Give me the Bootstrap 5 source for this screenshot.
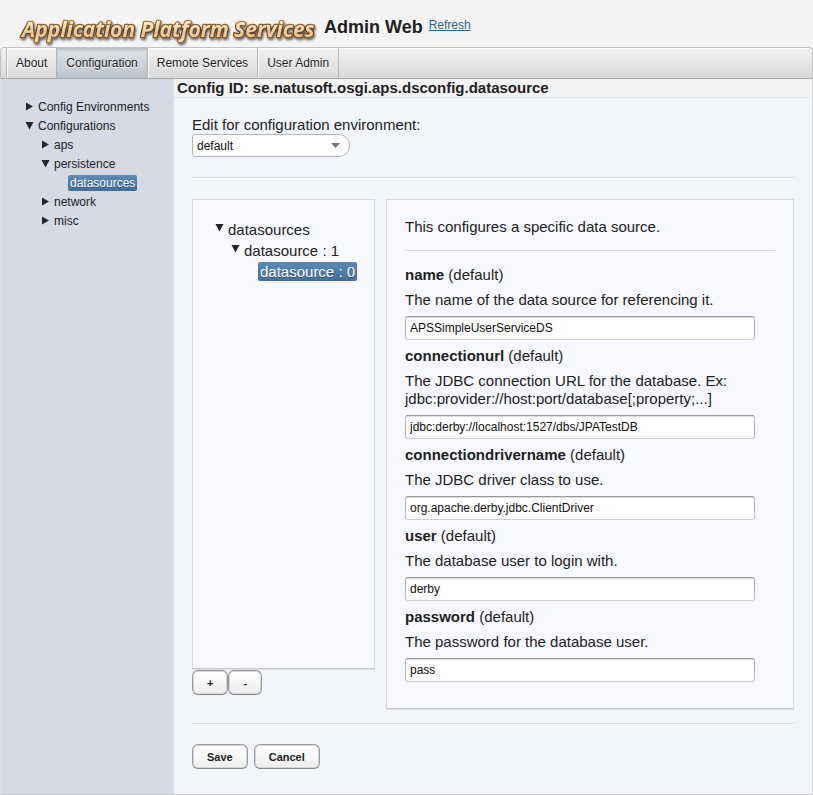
<!DOCTYPE html>
<html lang="en">
<head>
<meta charset="utf-8">
<meta name="viewport" content="width=device-width, initial-scale=1">
<title>Application Platform Services - Admin Web</title>
<link rel="stylesheet" href="https://cdn.jsdelivr.net/npm/bootstrap@5.3.0/dist/css/bootstrap.min.css">
<style>
  body { font-family: "Liberation Sans", Arial, sans-serif; font-size: 15px; line-height: 18px; color: #222; background: #f4f4f4; }
  .app-header { height: 47px; padding: 5px 0 0 20px; }
  .logo { font: italic 700 21px/30px "Open Sans", sans-serif; }
  .logo-svg { display: block; overflow: visible; }
  .app-title { font-size: 18px; line-height: 24px; margin: 10px 6px 0 9px; }
  .refresh { font-size: 12px; line-height: 16px; color: #1b699f; margin-top: 12px; }
  .menu { height: 32px; padding-left: 5px; border: 1px solid #c0c1c2; border-bottom-color: #a8a9aa; border-radius: 4px 4px 0 0; background: linear-gradient(#f2f2f2, #dadada); box-shadow: inset 0 1px #fff; }
  .menu .nav-link { font-size: 12px; line-height: 30px; padding: 0 9px; color: #222; border-right: 1px solid #b4b5b6; box-shadow: inset 1px 1px #fafafa; text-shadow: 0 1px #fff; }
  .menu .first { border-left: 1px solid #b4b5b6; }
  .menu .active { background: linear-gradient(#dfe4e7, #bdc5ca); box-shadow: inset 0 2px 3px #b6bec3; }
  .sidebar { flex: 0 0 174px; background: #d6dae2; border-left: 1px solid #e0e0e0; border-right: 3px solid #dbdcdf; padding: 18px 0 0 24px; }
  .main-pane { min-width: 0; background: #f2f6fb; border-right: 1px solid #d8d9da; }
  .shell { border-bottom: 1px solid #c8c9cb; }
  .config-id { background: #f4f4f4; border-bottom: 1px solid #e3e4e5; font-size: 15px; line-height: 18px; padding-left: 3px; margin: 0; }
  .work { padding: 18px 18px 24px; }
  .tree, .tree ul { list-style: none; margin: 0; padding: 0; }
  .tree ul { padding-left: 16px; }
  .tree-node { display: flex; align-items: center; border: 0; background: none; padding: 0; color: #222; }
  .tree-node svg { flex: none; fill: #222829; }
  .tree-sm .tree-node { font-size: 12px; height: 19px; }
  .tree-sm svg { width: 9px; height: 9px; margin-right: 4px; }
  .tree-lg .tree-node { font-size: 15px; height: 21px; }
  .tree-lg svg { width: 9px; height: 9px; margin: 0 4px 4px 0; }
  .picked { color: #fff; background: linear-gradient(#5a8bb5, #446f9b); border-radius: 2px; text-shadow: 0 1px #35597c; margin-left: 11px; padding: 0 2px; }
  .tree-sm .picked { line-height: 16px; }
  .tree-lg .picked { line-height: 19px; }
  .env { appearance: none; width: 100%; height: 23px; font-size: 12px; line-height: 16px; padding: 0 20px 0 4px; color: #111; border: 1px solid #b3b5b7; border-radius: 3px 11px 11px 3px; background-color: #fff; }
  .env-wrap { width: 158px; }
  .env-arrow { right: 10px; top: 9px; fill: #777; pointer-events: none; }
  .rule { border: 0; border-top: 1px solid #d8dadd; border-bottom: 1px solid #fff; opacity: 1; margin: 0; color: inherit; }
  .rule-top { margin: 20px 0; }
  .rule-form { margin: 14px 0; }
  .rule-end { margin: 14px 0 19px; }
  .panels { gap: 11px; }
  .pane { background: #f8f9ff; border: 1px solid #d8dbdf; border-bottom-color: #c6c8cb; box-shadow: 0 1px #dcdfe2; }
  .left-col { flex: 0 0 183px; gap: 1px; padding-bottom: 14px; }
  .tree-pane { flex: 1; padding: 19px 0 0 22px; }
  .form-pane { min-width: 0; padding: 18px 18px 26px; }
  .entry { width: 350px; max-width: 100%; height: 24px; font-size: 12px; padding: 0 4px; color: #111; border: 1px solid #bcbdbf; border-top-color: #96989a; border-bottom-color: #d0d1d2; border-radius: 3px; background: #fff; box-shadow: inset 0 1px #ddd; }
  .field-stack { gap: 7px; }
  .actions { gap: 6px; }
  .push { height: 25px; font-size: 11px; font-weight: 700; line-height: 16px; padding: 0 14px; color: #222; border: 1px solid #999b9e; border-bottom-color: #858789; border-radius: 6px; background: linear-gradient(#fff, #ededed); box-shadow: inset 0 0 0 1px #d6d7d8; }
  .push:hover { background: #f0f0f0; border-color: #858789; }
</style>
<script src="https://cdn.jsdelivr.net/npm/bootstrap@5.3.0/dist/js/bootstrap.bundle.min.js"></script>
</head>
<body class="d-flex flex-column min-vh-100">
<svg class="d-none" aria-hidden="true">
  <symbol id="shut" viewBox="0 0 9 9"><path d="M1 0.5 8 4.5 1 8.5z"/></symbol>
  <symbol id="open" viewBox="0 0 9 9"><path d="M0.500 1h8l-4 7.500z"/></symbol>
</svg>
<header class="app-header d-flex align-items-start">
  <svg class="logo-svg" width="295" height="40" role="img" aria-label="Application Platform Services">
    <defs>
      <linearGradient id="gold" x1="0" y1="0" x2="0" y2="1">
        <stop offset="0.2" stop-color="#fff3d8"/><stop offset="0.65" stop-color="#e6c596"/><stop offset="1" stop-color="#f6e0bb"/>
      </linearGradient>
      <linearGradient id="edge" x1="0" y1="0" x2="0" y2="1">
        <stop offset="0.2" stop-color="#b27c37"/><stop offset="0.55" stop-color="#59371a"/><stop offset="1" stop-color="#a66e2c"/>
      </linearGradient>
      <filter id="soft" x="-5%" y="-20%" width="110%" height="160%"><feDropShadow dx="1" dy="2" stdDeviation="1.2" flood-color="#222" flood-opacity=".65"/></filter>
    </defs>
    <text class="logo" x="2" y="32" fill="url(#gold)" stroke="url(#edge)" stroke-width="2.5" stroke-linejoin="round" paint-order="stroke" filter="url(#soft)">Application Platform Services</text>
  </svg>
  <h1 class="app-title fw-bold">Admin Web</h1>
  <a class="refresh" href="#">Refresh</a>
</header>
<nav class="menu nav flex-nowrap" aria-label="Main">
  <a class="nav-link first" href="#">About</a>
  <a class="nav-link active" href="#" aria-current="page">Configuration</a>
  <a class="nav-link" href="#">Remote Services</a>
  <a class="nav-link" href="#">User Admin</a>
</nav>
<div class="shell d-flex flex-grow-1">
  <aside class="sidebar">
    <ul class="tree tree-sm">
      <li><button class="tree-node" type="button"><svg><use href="#shut"/></svg>Config Environments</button></li>
      <li><button class="tree-node" type="button"><svg><use href="#open"/></svg>Configurations</button>
        <ul>
          <li><button class="tree-node" type="button"><svg><use href="#shut"/></svg>aps</button></li>
          <li><button class="tree-node" type="button"><svg><use href="#open"/></svg>persistence</button>
            <ul><li><button class="tree-node" type="button"><span class="picked">datasources</span></button></li></ul>
          </li>
          <li><button class="tree-node" type="button"><svg><use href="#shut"/></svg>network</button></li>
          <li><button class="tree-node" type="button"><svg><use href="#shut"/></svg>misc</button></li>
        </ul>
      </li>
    </ul>
  </aside>
  <main class="main-pane flex-grow-1">
    <h2 class="config-id fw-bold">Config ID: se.natusoft.osgi.aps.dsconfig.datasource</h2>
    <div class="work">
      <label class="d-block" for="env">Edit for configuration environment:</label>
      <div class="env-wrap position-relative">
        <select class="env d-block" id="env"><option>default</option></select>
        <svg class="env-arrow position-absolute" width="9" height="5" aria-hidden="true"><path d="M0 0h9L4.500 5z"/></svg>
      </div>
      <hr class="rule rule-top">
      <div class="d-flex panels">
        <div class="left-col d-flex flex-column">
          <div class="pane tree-pane">
            <ul class="tree tree-lg">
              <li><button class="tree-node" type="button"><svg><use href="#open"/></svg>datasources</button>
                <ul><li><button class="tree-node" type="button"><svg><use href="#open"/></svg>datasource : 1</button>
                  <ul><li><button class="tree-node" type="button"><span class="picked">datasource : 0</span></button></li></ul>
                </li></ul>
              </li>
            </ul>
          </div>
          <div class="d-flex">
            <button class="push" type="button">+</button>
            <button class="push" type="button">-</button>
          </div>
        </div>
        <form class="pane form-pane flex-grow-1">
          <p class="mb-0">This configures a specific data source.</p>
          <hr class="rule rule-form">
          <div class="field-stack d-flex flex-column align-items-start">
            <label for="f-name"><b>name</b> (default)</label>
            <div>The name of the data source for referencing it.</div>
            <input class="entry" id="f-name" type="text" value="APSSimpleUserServiceDS">
            <label for="f-url"><b>connectionurl</b> (default)</label>
            <div>The JDBC connection URL for the database. Ex: jdbc:provider://host:port/database[;property;...]</div>
            <input class="entry" id="f-url" type="text" value="jdbc:derby://localhost:1527/dbs/JPATestDB">
            <label for="f-driver"><b>connectiondrivername</b> (default)</label>
            <div>The JDBC driver class to use.</div>
            <input class="entry" id="f-driver" type="text" value="org.apache.derby.jdbc.ClientDriver">
            <label for="f-user"><b>user</b> (default)</label>
            <div>The database user to login with.</div>
            <input class="entry" id="f-user" type="text" value="derby">
            <label for="f-pass"><b>password</b> (default)</label>
            <div>The password for the database user.</div>
            <input class="entry" id="f-pass" type="text" value="pass">
          </div>
        </form>
      </div>
      <hr class="rule rule-end">
      <div class="d-flex actions">
        <button class="push" type="button">Save</button>
        <button class="push" type="button">Cancel</button>
      </div>
    </div>
  </main>
</div>
</body>
</html>
